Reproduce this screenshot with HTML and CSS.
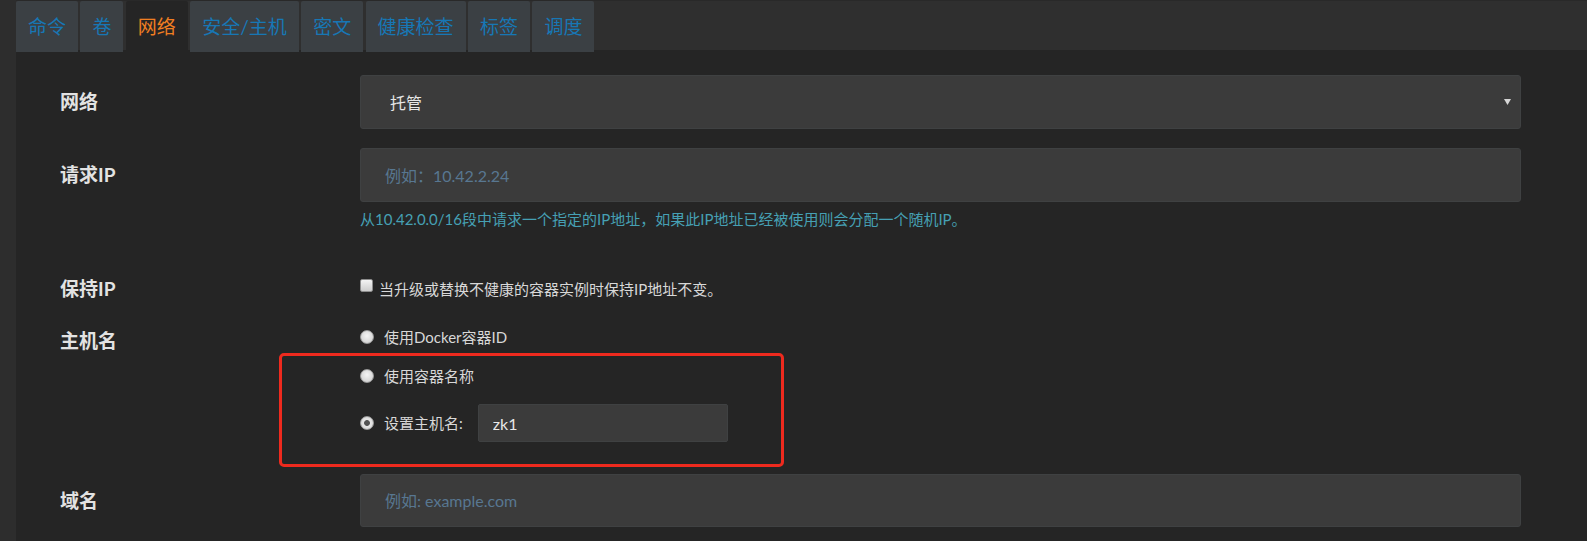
FILE: index.html
```html
<!DOCTYPE html>
<html lang="zh-CN">
<head>
<meta charset="utf-8">
<title>网络</title>
<link rel="stylesheet" href="styles.css">
</head>
<body>
<div class="page">
  <nav class="tabbar">
    <a class="tab">命令</a>
    <a class="tab">卷</a>
    <a class="tab active">网络</a>
    <a class="tab">安全/主机</a>
    <a class="tab">密文</a>
    <a class="tab">健康检查</a>
    <a class="tab">标签</a>
    <a class="tab">调度</a>
  </nav>

  <div class="content">
    <div class="row row-network">
      <div class="label label-tall">网络</div>
      <div class="field">
        <div class="select-wrap">
          <select class="control select">
            <option>托管</option>
          </select>
          <svg class="select-arrow" width="7" height="6" viewBox="0 0 7 6"><polygon points="0,0 7,0 3.5,6" fill="#d6d6d6"/></svg>
        </div>
      </div>
    </div>

    <div class="row row-ip">
      <div class="label label-tall">请求IP</div>
      <div class="field">
        <input class="control text-input" type="text" placeholder="例如：10.42.2.24">
        <p class="help">从10.42.0.0/16段中请求一个指定的IP地址，如果此IP地址已经被使用则会分配一个随机IP。</p>
      </div>
    </div>

    <div class="row row-keep">
      <div class="label label-line">保持IP</div>
      <div class="field">
        <label class="check-line">
          <input class="checkbox" type="checkbox">
          <span>当升级或替换不健康的容器实例时保持IP地址不变。</span>
        </label>
      </div>
    </div>

    <div class="row row-host">
      <div class="label label-host">主机名</div>
      <div class="field radios">
        <label class="radio-line first">
          <input class="radio" type="radio" name="host">
          <span>使用Docker容器ID</span>
        </label>
        <label class="radio-line second">
          <input class="radio" type="radio" name="host">
          <span>使用容器名称</span>
        </label>
        <label class="radio-line third">
          <input class="radio" type="radio" name="host" checked>
          <span class="radio-text">设置主机名:</span>
          <input class="host-input" type="text" value="zk1">
        </label>
      </div>
    </div>

    <div class="row row-domain">
      <div class="label label-domain">域名</div>
      <div class="field">
        <input class="control text-input domain-input" type="text" placeholder="例如: example.com">
      </div>
    </div>
  </div>

  <div class="annotation"></div>
</div>
</body>
</html>
```

FILE: styles.css
```css
html, body {
  margin: 0;
  padding: 0;
  background: #2d2d2d;
}

body {
  font-family: Lato, "Noto Sans CJK SC", sans-serif;
  color: #dcdcdc;
}

.page {
  position: relative;
  margin-left: 16px;
  min-height: 541px;
  background: #252525;
  overflow: hidden;
}

/* ---------- tabs ---------- */
.tabbar {
  display: flex;
  gap: 2.4px;
  height: 52px;
  box-sizing: border-box;
  padding-top: 1px;
  background: linear-gradient(#292929 0 1px, #2f2f2f 1px 50px, #252525 50px);
}

.tab {
  display: flex;
  align-items: center;
  height: 51px;
  padding: 0 12px;
  background: #3b4044;
  color: #1777b5;
  font-size: 19px;
  line-height: 1;
  white-space: nowrap;
  border-radius: 2px 2px 0 0;
  cursor: pointer;
}

.tab.active {
  background: #252525;
  color: #f07e22;
}

/* ---------- form ---------- */
.content {
  padding: 23px 66px 40px 44px;
}

.row {
  display: flex;
  align-items: flex-start;
}

.label {
  flex: none;
  width: 300px;
  font-size: 19px;
  font-weight: 700;
  color: #e2e2e2;
}

.label-tall { line-height: 54px; }
.label-line { line-height: 20px; }
.label-host { line-height: 28px; }
.label-domain { line-height: 53px; }

.field {
  flex: 1;
  min-width: 0;
}

.row-ip { margin-top: 19px; }
.row-keep { margin-top: 50px; }
.row-host { margin-top: 28px; }
.row-domain { margin-top: 32px; }

.control {
  display: block;
  width: 100%;
  height: 54px;
  box-sizing: border-box;
  margin: 0;
  background: #3b3b3b;
  border: 1px solid #3f4142;
  border-radius: 3px;
  color: #e6e6e6;
  font-family: inherit;
  font-size: 16px;
  outline: none;
}

.select-wrap {
  position: relative;
}

.select {
  appearance: none;
  -webkit-appearance: none;
  padding: 0 30px 0 29px;
}

.select-arrow {
  position: absolute;
  right: 10px;
  top: 24px;
}

.text-input {
  padding: 0 20px 0 24px;
}

.domain-input {
  height: 53px;
}

.text-input::placeholder {
  color: #587791;
  opacity: 1;
}

.help {
  margin: 7px 0 0;
  font-size: 15px;
  line-height: 20px;
  color: #46a0b4;
  white-space: nowrap;
}

/* checkbox */
.check-line {
  display: flex;
  align-items: flex-start;
  font-size: 15px;
  line-height: 20px;
  color: #d8d8d8;
}

.checkbox {
  appearance: none;
  -webkit-appearance: none;
  flex: none;
  width: 13px;
  height: 13px;
  margin: 0 6px 0 0;
  box-sizing: border-box;
  border: 1px solid #8d8d8d;
  border-radius: 2px;
  background: linear-gradient(#f3f3f3, #cdcdcd);
}

/* radios */
.radios {
  display: flex;
  flex-direction: column;
}

.radio-line {
  display: flex;
  align-items: center;
  font-size: 15px;
  line-height: 20px;
  color: #d8d8d8;
}

.radio-line.second { margin-top: 19px; }
.radio-line.third { margin-top: 18px; }

.radio {
  appearance: none;
  -webkit-appearance: none;
  flex: none;
  width: 14px;
  height: 14px;
  margin: 0 10px 0 0;
  box-sizing: border-box;
  border: 1px solid #9a9a9a;
  border-radius: 50%;
  background: radial-gradient(circle at 50% 40%, #f4f4f4 0, #d6d6d6 70%, #c4c4c4 100%);
}

.radio:checked {
  background: radial-gradient(circle at 50% 50%, #545454 0 2.5px, #e6e6e6 3.3px, #d2d2d2 100%);
}

.radio-text {
  margin-right: 15px;
}

.host-input {
  width: 250px;
  height: 38px;
  box-sizing: border-box;
  margin: 0;
  padding: 0 14px;
  background: #3b3b3b;
  border: 1px solid #3f4142;
  border-radius: 2px;
  color: #e8e8e8;
  font-family: inherit;
  font-size: 16px;
  outline: none;
}

/* red annotation box drawn over the screenshot */
.annotation {
  position: absolute;
  left: 263px;
  top: 353px;
  width: 505px;
  height: 114px;
  box-sizing: border-box;
  border: 3px solid #ee2a1e;
  border-radius: 5px;
  pointer-events: none;
}
```
